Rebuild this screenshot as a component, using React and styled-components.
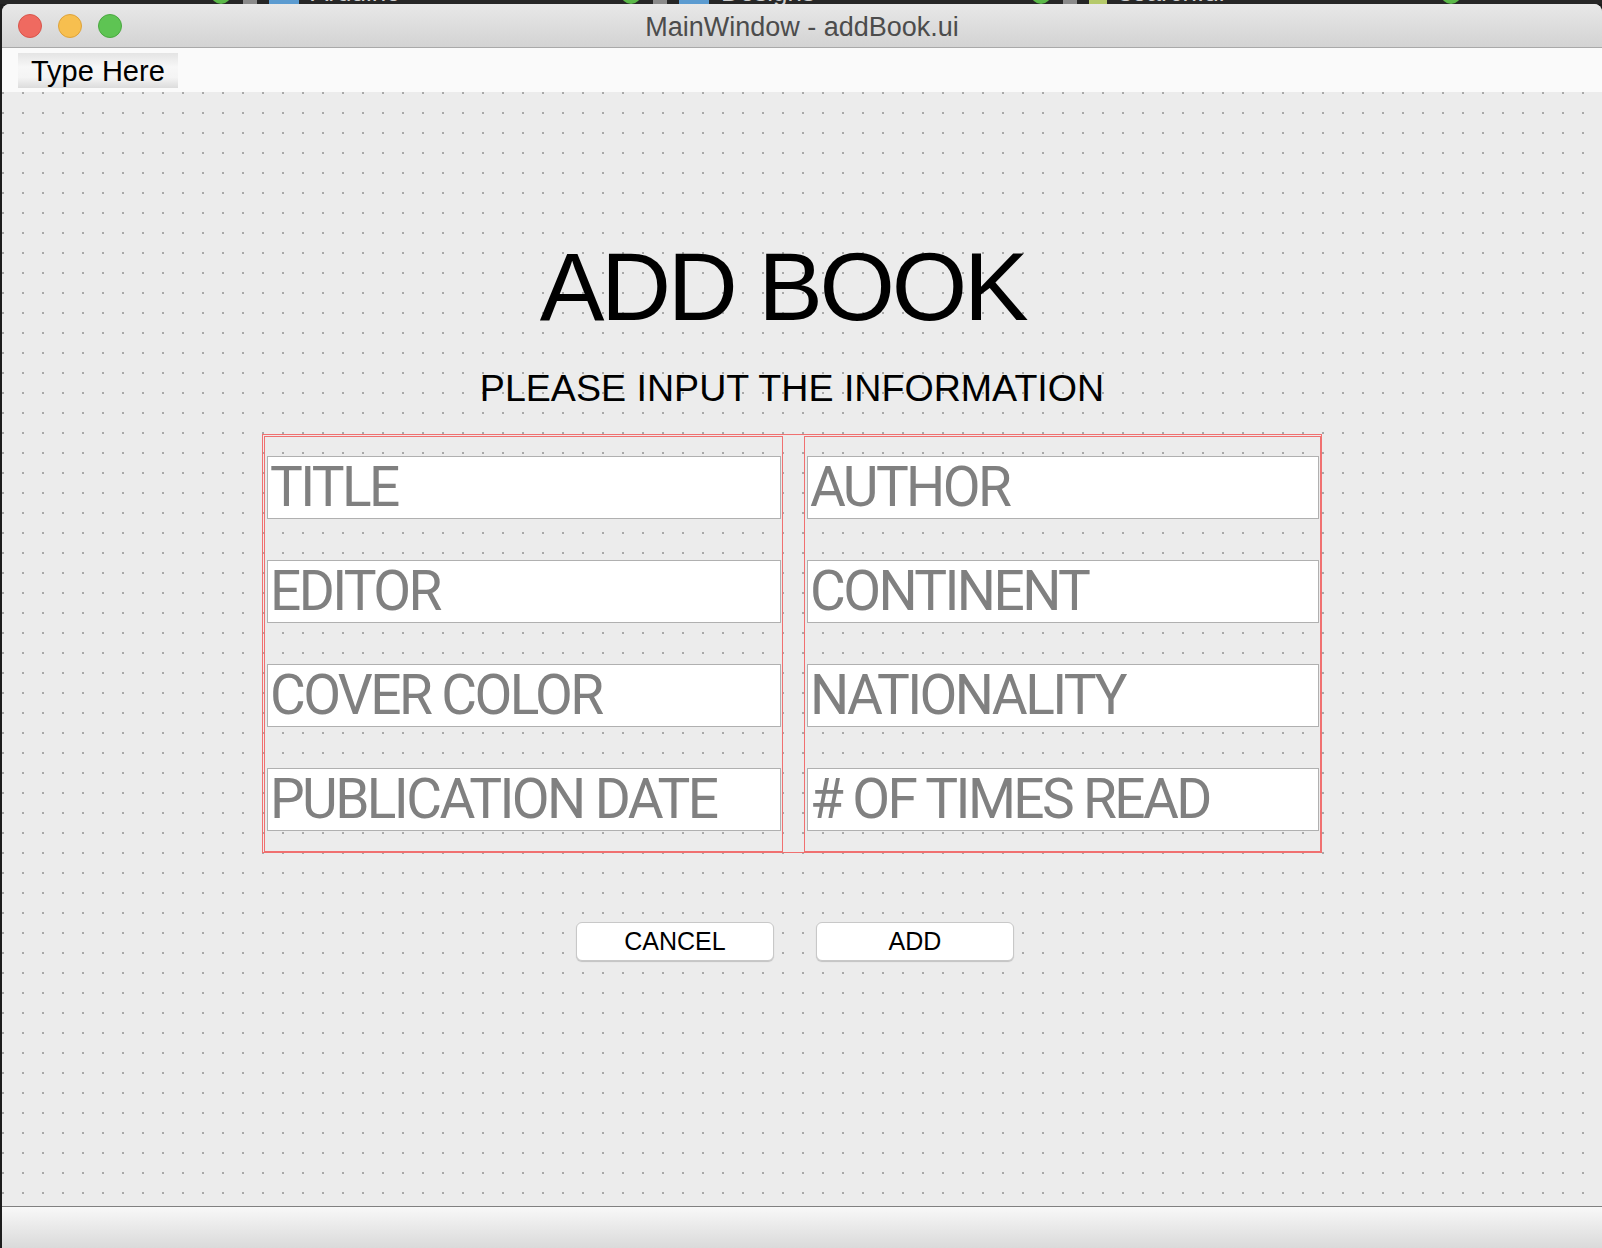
import styled, { createGlobalStyle } from "styled-components";

const GlobalStyle = createGlobalStyle`
  html, body {
    margin: 0;
    padding: 0;
    background: #1d1d1d;
    overflow: hidden;
  }
  * {
    box-sizing: border-box;
  }
`;

const Desktop = styled.div`
  width: 1602px;
  height: 1248px;
  display: flex;
  flex-direction: column;
  padding-left: 2px;
  font-family: "Liberation Sans", Arial, sans-serif;
`;

const PeekStrip = styled.div`
  height: 4px;
  flex-shrink: 0;
  display: flex;
  align-items: flex-end;
  overflow: hidden;
  padding-left: 211px;
  margin-left: -2px;
  background: #262626;
`;

const PeekTab = styled.div`
  display: flex;
  align-items: flex-end;
  gap: 12px;
  width: 410px;
  height: 24px;
  flex-shrink: 0;
`;

const PeekDot = styled.div`
  width: 20px;
  height: 20px;
  border-radius: 50%;
  background: #5ab848;
`;

const PeekIcon = styled.div`
  width: ${(p) => p.$w || 30}px;
  height: 20px;
  background: ${(p) => p.$color};
`;

const PeekText = styled.span`
  font-size: 26px;
  line-height: 24px;
  color: #cfcfcf;
`;

const Window = styled.div`
  flex: 1;
  display: flex;
  flex-direction: column;
  border-radius: 8px 8px 0 0;
  overflow: hidden;
  background: #ececec;
`;

const TitleBar = styled.div`
  height: 44px;
  flex-shrink: 0;
  display: grid;
  grid-template-columns: 1fr auto 1fr;
  align-items: center;
  background: linear-gradient(#e8e8e8, #d3d3d3);
  border-bottom: 1px solid #a9a9a9;
`;

const Lights = styled.div`
  display: flex;
  gap: 16px;
  padding-left: 16px;
`;

const Light = styled.span`
  width: 24px;
  height: 24px;
  border-radius: 50%;
  background: ${(p) => p.$color};
  border: 1px solid ${(p) => p.$edge};
`;

const WindowTitle = styled.div`
  font-size: 27px;
  color: #4c4c4c;
  line-height: 1;
  padding-top: 4px;
`;

const MenuBar = styled.div`
  height: 44px;
  flex-shrink: 0;
  display: flex;
  align-items: flex-start;
  padding: 5px 0 0 16px;
  background: #fafafa;
`;

const MenuItem = styled.div`
  width: 160px;
  height: 35px;
  display: flex;
  align-items: center;
  padding: 2px 0 0 13px;
  font-size: 29px;
  color: #000;
  background: linear-gradient(#e4e4e4, #f7f7f7 40%, #f4f4f4 70%, #dcdcdc);
`;

const Canvas = styled.div`
  flex: 1;
  display: flex;
  padding: 146px 0 0 260px;
  background-color: #ececec;
  background-image: radial-gradient(
    circle at 1px 1px,
    #a9a9a9 0.8px,
    transparent 1.3px
  );
  background-size: 20px 20px;
`;

const Content = styled.div`
  width: 1060px;
  display: flex;
  flex-direction: column;
  align-items: center;
`;

const Heading = styled.h1`
  margin: 0 19px 0 0;
  font-weight: 400;
  font-size: 97px;
  line-height: 1;
  letter-spacing: -3.3px;
  color: #000;
`;

const Subheading = styled.h2`
  margin: 35px 0 0;
  font-weight: 400;
  font-size: 37.6px;
  line-height: 1;
  color: #000;
`;

const Frame = styled.div`
  align-self: stretch;
  margin-top: 26px;
  display: grid;
  grid-template-columns: 519px 517px;
  column-gap: 21px;
  padding: 1px 0 0 1px;
  border: 1px solid #f07070;
`;

const Column = styled.div`
  display: flex;
  flex-direction: column;
  gap: 41px;
  padding: 19px 1px 20px 2px;
  border: 1px solid #f07070;
`;

const Field = styled.input`
  height: 63px;
  width: 100%;
  margin: 0;
  padding: 0 2px;
  border: 1px solid #b0b0b0;
  border-radius: 0;
  background: #fff;
  outline: none;
  font-family: Roboto, "Liberation Sans", sans-serif;
  font-size: 55px;
  letter-spacing: -2.6px;
  color: #808080;

  &::placeholder {
    color: #808080;
    opacity: 1;
  }
`;

const ButtonRow = styled.div`
  margin-top: 69px;
  padding-left: 6px;
  display: flex;
  gap: 42px;
`;

const Button = styled.button`
  width: 198px;
  height: 39px;
  padding: 0;
  border: 1px solid #c8c8c8;
  border-radius: 6px;
  background: #fff;
  box-shadow: 0 1px 1px rgba(0, 0, 0, 0.18);
  font-family: "Liberation Sans", Arial, sans-serif;
  font-size: 25px;
  color: #000;
  cursor: pointer;
`;

const StatusBar = styled.div`
  height: 42px;
  flex-shrink: 0;
  border-top: 1px solid #808080;
  background: linear-gradient(#f8f8f8, #dadada);
`;

const leftFields = ["TITLE", "EDITOR", "COVER COLOR", "PUBLICATION DATE"];
const rightFields = ["AUTHOR", "CONTINENT", "NATIONALITY", "# OF TIMES READ"];
const peekTabs = [
  { name: "Arduino", icon: "#5b9bd0", w: 30 },
  { name: "Designs", icon: "#5b9bd0", w: 30 },
  { name: "search.ui", icon: "#b5c96a", w: 18 },
];

export default function App() {
  return (
    <>
      <GlobalStyle />
      <Desktop>
        <PeekStrip>
          {peekTabs.map((t) => (
            <PeekTab key={t.name}>
              <PeekDot />
              <PeekIcon $color="#8a8a8a" $w={14} />
              <PeekIcon $color={t.icon} $w={t.w} />
              <PeekText>{t.name}</PeekText>
            </PeekTab>
          ))}
          <PeekTab>
            <PeekDot />
          </PeekTab>
        </PeekStrip>
        <Window>
          <TitleBar>
            <Lights>
              <Light $color="#ef6a60" $edge="#d8554b" />
              <Light $color="#f7bf4f" $edge="#dea33a" />
              <Light $color="#5ec453" $edge="#4aa840" />
            </Lights>
            <WindowTitle>MainWindow - addBook.ui</WindowTitle>
            <div />
          </TitleBar>
          <MenuBar>
            <MenuItem>Type Here</MenuItem>
          </MenuBar>
          <Canvas>
            <Content>
              <Heading>ADD BOOK</Heading>
              <Subheading>PLEASE INPUT THE INFORMATION</Subheading>
              <Frame>
                <Column>
                  {leftFields.map((f) => (
                    <Field key={f} placeholder={f} />
                  ))}
                </Column>
                <Column>
                  {rightFields.map((f) => (
                    <Field key={f} placeholder={f} />
                  ))}
                </Column>
              </Frame>
              <ButtonRow>
                <Button>CANCEL</Button>
                <Button>ADD</Button>
              </ButtonRow>
            </Content>
          </Canvas>
          <StatusBar />
        </Window>
      </Desktop>
    </>
  );
}
